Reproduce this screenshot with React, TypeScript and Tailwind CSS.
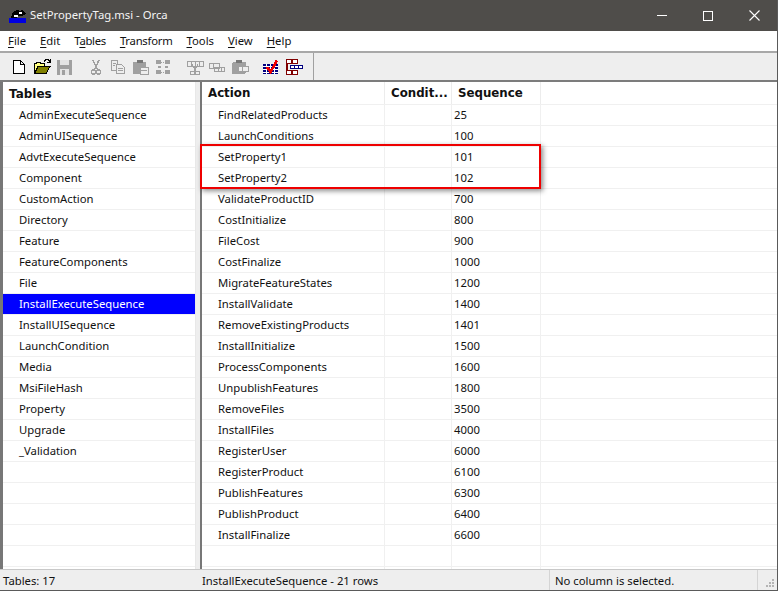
const tables = [
  'AdminExecuteSequence', 'AdminUISequence', 'AdvtExecuteSequence', 'Component', 'CustomAction', 'Directory',
  'Feature', 'FeatureComponents', 'File', 'InstallExecuteSequence', 'InstallUISequence', 'LaunchCondition',
  'Media', 'MsiFileHash', 'Property', 'Upgrade', '_Validation',
]

const actions: [string, string][] = [
  ['FindRelatedProducts', '25'], ['LaunchConditions', '100'], ['SetProperty1', '101'], ['SetProperty2', '102'],
  ['ValidateProductID', '700'], ['CostInitialize', '800'], ['FileCost', '900'], ['CostFinalize', '1000'],
  ['MigrateFeatureStates', '1200'], ['InstallValidate', '1400'], ['RemoveExistingProducts', '1401'],
  ['InstallInitialize', '1500'], ['ProcessComponents', '1600'], ['UnpublishFeatures', '1800'], ['RemoveFiles', '3500'],
  ['InstallFiles', '4000'], ['RegisterUser', '6000'], ['RegisterProduct', '6100'], ['PublishFeatures', '6300'],
  ['PublishProduct', '6400'], ['InstallFinalize', '6600'], ['', ''], ['', ''],
]

const Pixel = ({ children }: { children: React.ReactNode }) => (
  <svg width="20" height="18" viewBox="0 0 20 18" shapeRendering="crispEdges" className="shrink-0">{children}</svg>
)

const GRAY = '#a0a0a0'

function AppIcon() {
  return (
    <svg width="17" height="14" viewBox="0 0 17 14" shapeRendering="crispEdges">
      <path d="M2 8L4 3L8 1L11 2L13 0L15 3L17 5L13 7L9 7L6 10H2Z" fill="#000" />
      <rect x="10" y="3" width="3" height="2" fill="#fff" />
      <rect x="5" y="6" width="4" height="2" fill="#fff" />
      <rect x="0" y="9" width="17" height="5" fill="#0000e0" />
    </svg>
  )
}

function Tool({ kind }: { kind: string }) {
  switch (kind) {
    case 'new':
      return <Pixel><path d="M4.5 2.5H11.5L15.5 6.5V15.5H4.5Z M11.5 2.5V6.5H15.5" fill="#fff" stroke="#000" /></Pixel>
    case 'open':
      return (
        <Pixel>
          <path d="M2.5 14.5V5.5H4V4H8V5.5H12V8" fill="#ffff80" stroke="#000" />
          <path d="M2.5 15.5L6 8.5H18L14 15.5Z" fill="#808000" stroke="#000" />
          <path d="M12 3.5L14 1.5H16L18 3.5M18 1V4H15" fill="none" stroke="#000" />
        </Pixel>
      )
    case 'save':
      return (
        <Pixel>
          <rect x="3" y="2" width="15" height="15" fill={GRAY} />
          <rect x="6" y="2" width="9" height="5" fill="#e4e4e4" />
          <rect x="6" y="11" width="9" height="6" fill="#e4e4e4" />
          <rect x="8" y="12" width="3" height="5" fill={GRAY} />
        </Pixel>
      )
    case 'cut':
      return (
        <Pixel>
          <path d="M7 2L11 11M13 2L9 11" stroke={GRAY} strokeWidth="1.5" fill="none" />
          <circle cx="7.5" cy="14" r="2" fill="none" stroke={GRAY} strokeWidth="1.5" />
          <circle cx="12.5" cy="14" r="2" fill="none" stroke={GRAY} strokeWidth="1.5" />
        </Pixel>
      )
    case 'copy':
      return (
        <Pixel>
          <path d="M3.5 2.5H9.5V12.5H3.5Z" fill="none" stroke={GRAY} />
          <path d="M8.5 6.5H13.5L16.5 9.5V15.5H8.5Z" fill="#eee" stroke={GRAY} />
          <path d="M5 5H8M5 7H7M10 10H15M10 12H15" stroke={GRAY} />
        </Pixel>
      )
    case 'paste':
      return (
        <Pixel>
          <rect x="2" y="4" width="13" height="12" rx="1" fill={GRAY} />
          <rect x="6" y="2" width="6" height="3" fill="#777" />
          <rect x="9" y="9" width="8" height="7" fill="#eee" stroke={GRAY} />
          <path d="M10 12H16" stroke={GRAY} />
        </Pixel>
      )
    case 'find':
      return (
        <Pixel>
          <path d="M3 2h5v4H3zM12 2h5v4h-5zM5 8h3v2H5zM12 8h3v2h-3zM3 12h5v4H3zM12 12h5v4h-5z" fill={GRAY} />
          <path d="M8 4H12M8 14H12" stroke={GRAY} strokeDasharray="1 1" />
        </Pixel>
      )
    case 'cutRow':
      return (
        <Pixel>
          <path d="M2 3H18V8H2Z M6 3V8 M10 3V8 M14 3V8" fill="none" stroke={GRAY} />
          <path d="M7 6L11 13M13 6L9 13" stroke={GRAY} />
          <circle cx="7.5" cy="15" r="2" fill="none" stroke={GRAY} />
          <circle cx="12.5" cy="15" r="2" fill="none" stroke={GRAY} />
        </Pixel>
      )
    case 'copyRow':
      return (
        <Pixel>
          <path d="M2.5 5.5H12.5V10.5H2.5ZM7.5 9.5H17.5V13.5H7.5Z M6 5.5V10.5M11 9.5V13.5M14 9.5V13.5" fill="#eee" stroke={GRAY} />
        </Pixel>
      )
    case 'pasteRow':
      return (
        <Pixel>
          <rect x="2" y="4" width="14" height="12" rx="2" fill={GRAY} />
          <rect x="6" y="2" width="6" height="3" fill="#777" />
          <path d="M8.5 8.5H18.5V13.5H8.5ZM12 8.5V13.5" fill="#eee" stroke={GRAY} />
        </Pixel>
      )
    case 'validate':
      return (
        <Pixel>
          <rect x="2" y="6" width="15" height="10" fill="#000080" />
          <path d="M2 8.5H17M2 11.5H17M2 14.5H17M5.5 6V16M9.5 6V16M13.5 6V16" stroke="#fff" />
          <path d="M6 9L9.5 14L16 2.5" fill="none" stroke="#f00000" strokeWidth="2.6" />
        </Pixel>
      )
    default:
      return (
        <Pixel>
          <path d="M3 5.5V14" fill="none" stroke="#800000" strokeWidth="2" />
          <path d="M2.5 1.5H13.5V5.5H2.5ZM2.5 12.5H13.5V16.5H2.5ZM8 1.5V5.5M8 12.5V16.5" fill="#fff" stroke="#800000" strokeWidth="1.4" />
          <path d="M6.5 7.5H18.5V10.5H6.5ZM10.5 7.5V10.5M14.5 7.5V10.5" fill="#fff" stroke="#000080" strokeWidth="1.4" />
        </Pixel>
      )
  }
}

function Menu({ first, rest }: { first: string; rest: string }) {
  return <span className="whitespace-pre"><span className="underline underline-offset-2">{first}</span>{rest}</span>
}

export default function App() {
  return (
    <div className="relative w-[778px] h-[591px] flex flex-col bg-white overflow-hidden text-[11.3px] text-[#111] border-r border-b border-[#5a5a5a] font-['Noto_Sans','Liberation_Sans',sans-serif]">
      {/* title bar */}
      <div className="h-[31px] shrink-0 bg-[#4f4d4a] flex items-center text-white">
        <div className="ml-[9px] mr-[4px] flex"><AppIcon /></div>
        <span className="text-[11.3px] text-[#f4f4f4]">SetPropertyTag.msi - Orca</span>
        <div className="ml-auto flex items-center">
          <div className="w-[46px] flex justify-center"><div className="w-[10px] h-px bg-white" /></div>
          <div className="w-[46px] flex justify-center"><div className="w-[10px] h-[10px] border border-white" /></div>
          <div className="w-[46px] flex justify-center">
            <svg width="11" height="11" viewBox="0 0 11 11"><path d="M0.5 0.5L10.5 10.5M10.5 0.5L0.5 10.5" stroke="#fff" strokeWidth="1.1" /></svg>
          </div>
        </div>
      </div>

      {/* menu */}
      <div className="h-[20px] shrink-0 flex items-center gap-[14px] pl-[8px]">
        <Menu first="F" rest="ile" />
        <Menu first="E" rest="dit" />
        <span className="whitespace-pre tracking-[-0.3px]">T<span className="underline underline-offset-2">a</span>bles</span>
        <span className="tracking-[-0.25px]"><Menu first="T" rest="ransform" /></span>
        <Menu first="T" rest="ools" />
        <Menu first="V" rest="iew" />
        <Menu first="H" rest="elp" />
      </div>

      {/* toolbar */}
      <div className="h-[31px] shrink-0 bg-[#eeeeee] border-t-2 border-b-2 border-t-[#a8a8a8] border-b-[#7c7c7c] flex items-center pl-[9px]">
        <div className="flex items-center gap-[2.5px]">
          <Tool kind="new" /><Tool kind="open" /><Tool kind="save" />
          <div className="w-[6.5px]" />
          <Tool kind="cut" /><Tool kind="copy" /><Tool kind="paste" /><Tool kind="find" />
          <div className="w-[6.5px]" />
          <Tool kind="cutRow" /><Tool kind="copyRow" /><Tool kind="pasteRow" />
          <div className="w-[6.5px]" />
          <Tool kind="validate" /><Tool kind="schema" />
        </div>
        <div className="ml-[9px] h-[27px] border-l border-[#a0a0a0]" />
      </div>

      {/* panes */}
      <div className="flex-1 min-h-0 flex bg-[#eeeeee]">
        <div className="w-[3px] shrink-0 bg-[#777]" />
        <div className="w-[193px] shrink-0 bg-white border-r border-[#e8e8e8] overflow-hidden">
          <div className="h-[23px] font-['DejaVu_Sans',sans-serif] font-bold text-[12px] pl-[6px] pt-[1px] flex items-center border-b border-[#f0f0f0]">Tables</div>
          {[...tables, ...Array(6).fill('')].map((t: string, i) => (
            <div
              key={i}
              className={`h-[21px] pl-[16px] flex items-center border-b border-[#f0f0f0] ${t === 'InstallExecuteSequence' ? 'bg-[#0000ff] text-white' : ''}`}
            >
              {t}
            </div>
          ))}
        </div>
        <div className="w-[4px] shrink-0" />
        <div className="w-[2px] shrink-0 bg-[#777]" />
        <div className="flex-1 bg-white overflow-hidden">
          <div className="h-[23px] flex font-['DejaVu_Sans',sans-serif] font-bold text-[11.8px] border-b border-[#f0f0f0]">
            <div className="w-[183px] pl-[6px] pt-[1px] flex items-center border-r border-[#ececec]">Action</div>
            <div className="w-[67px] pl-[6px] pt-[1px] flex items-center border-r border-[#ececec] whitespace-nowrap overflow-hidden">Condit...</div>
            <div className="w-[89px] pl-[6px] pt-[1px] flex items-center border-r border-[#ececec]">Sequence</div>
          </div>
          {actions.map(([a, s], i) => (
            <div key={i} className="h-[21px] flex border-b border-[#f0f0f0]">
              <div className="w-[183px] pl-[16px] flex items-center border-r border-[#f0f0f0]">{a}</div>
              <div className="w-[67px] border-r border-[#f0f0f0]" />
              <div className="w-[89px] pl-[2px] flex items-center border-r border-[#f0f0f0]">{s}</div>
            </div>
          ))}
        </div>
      </div>

      {/* status bar */}
      <div className="h-[21px] shrink-0 bg-[#eeeeee] border-t border-[#c8c8c8] flex items-center">
        <div className="w-[202px] pl-[3px] pt-[2px]">Tables: 17</div>
        <div className="w-[347px] pt-[2px]">InstallExecuteSequence - 21 rows</div>
        <div className="h-full border-l border-[#d4d4d4] pl-[5px] pt-[2px] flex items-center w-[208px]">No column is selected.</div>
        <div className="h-full border-l border-[#d4d4d4] flex-1 flex items-end justify-end pr-[2px] pb-[2px]">
          <svg width="10" height="10" viewBox="0 0 10 10" shapeRendering="crispEdges">
            <path d="M7 1h2v2H7zM4 4h2v2H4zM7 4h2v2H7zM1 7h2v2H1zM4 7h2v2H4zM7 7h2v2H7z" fill="#b4b4b4" />
          </svg>
        </div>
      </div>

      {/* red highlight over the rows */}
      <div className="absolute left-[200px] top-[144px] w-[341px] h-[45px] border-2 border-[#ee0000] shadow-[2px_2px_5px_rgba(0,0,0,0.45)]" />
    </div>
  )
}
